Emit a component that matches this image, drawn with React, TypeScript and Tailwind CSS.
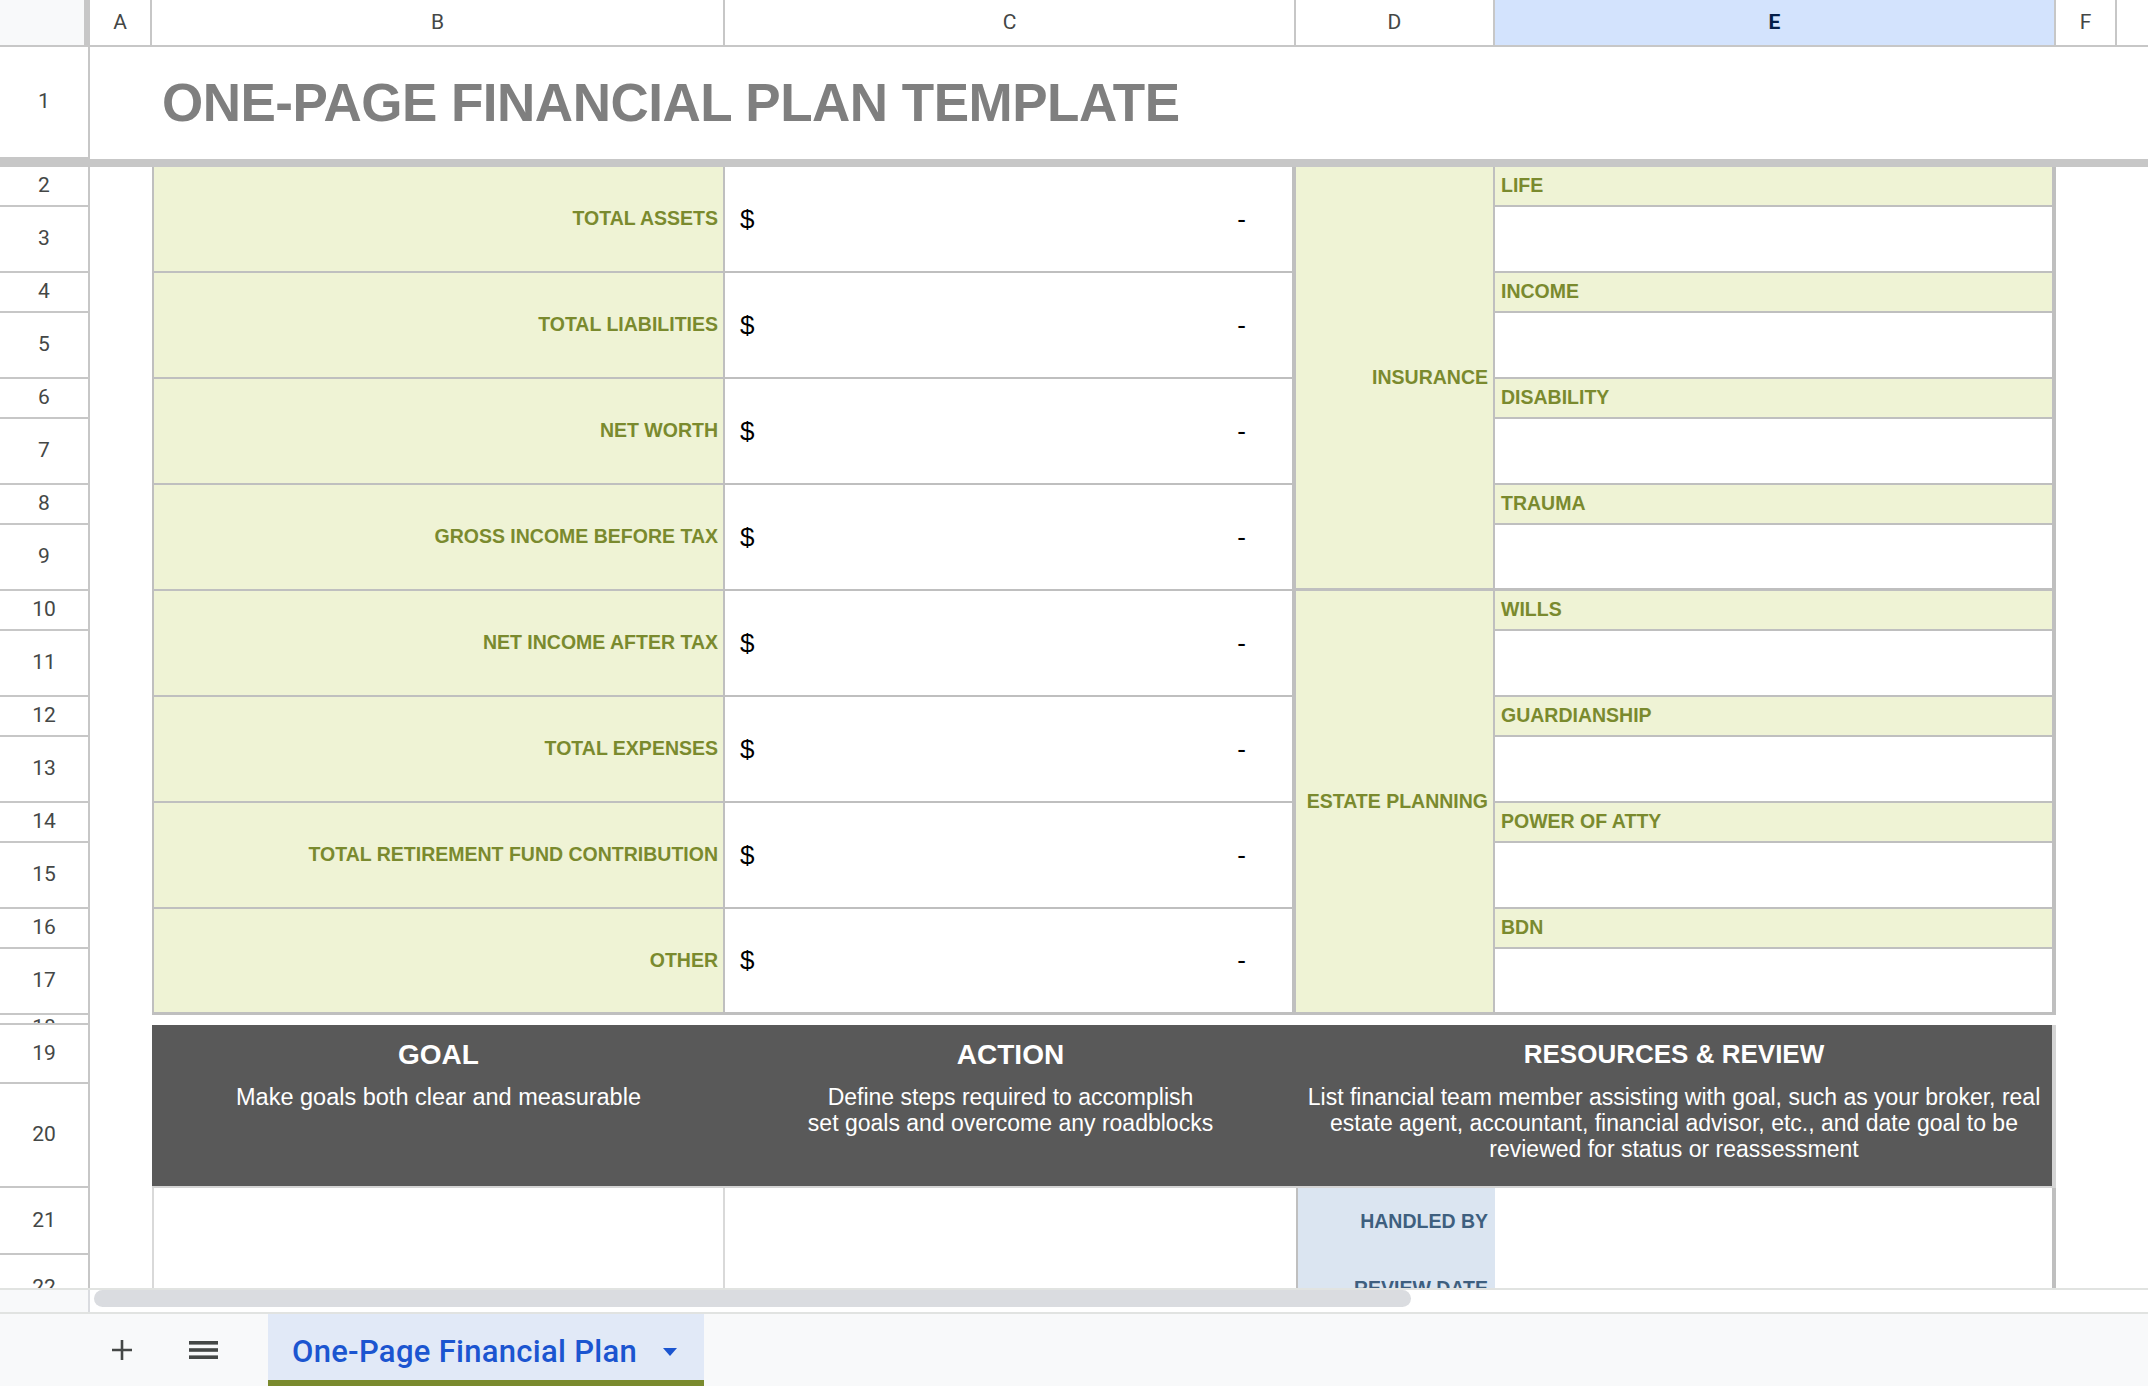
import React from "react";

const metrics = [
  "TOTAL ASSETS",
  "TOTAL LIABILITIES",
  "NET WORTH",
  "GROSS INCOME BEFORE TAX",
  "NET INCOME AFTER TAX",
  "TOTAL EXPENSES",
  "TOTAL RETIREMENT FUND CONTRIBUTION",
  "OTHER",
];

const coverGroups = [
  { title: "INSURANCE", items: ["LIFE", "INCOME", "DISABILITY", "TRAUMA"] },
  { title: "ESTATE PLANNING", items: ["WILLS", "GUARDIANSHIP", "POWER OF ATTY", "BDN"] },
];

const columns = [
  { id: "A", w: "w-[62px]" },
  { id: "B", w: "w-[573px]" },
  { id: "C", w: "w-[571px]" },
  { id: "D", w: "w-[199px]" },
  { id: "E", w: "w-[561px]", active: true },
  { id: "F", w: "w-[61px]" },
];

const bodyRows = Array.from({ length: 16 }, (_, i) => ({
  n: String(i + 2),
  h: i % 2 === 0 ? "h-[40px]" : "h-[66px]",
}));

const tailRows = [
  { n: "19", h: "h-[59px]" },
  { n: "20", h: "h-[104px]" },
  { n: "21", h: "h-[67px]" },
  { n: "22", h: "h-[67px]" },
];

const RowNum = ({ n, h }: { n: string; h: string }) => (
  <div
    className={`${h} flex shrink-0 items-center justify-center overflow-hidden border-b-2 border-[#c7c7c7] text-[21px] text-[#444746]`}
  >
    {n}
  </div>
);

const App = () => {
  return (
    <div className="flex h-screen w-full flex-col overflow-hidden bg-white font-['Liberation_Sans',Arial,sans-serif]">
      {/* column headers */}
      <div className="flex h-[47px] shrink-0 border-b-2 border-[#c7c7c7] font-['Roboto',sans-serif] text-[21px] text-[#444746]">
        <div className="w-[90px] shrink-0 border-r-[6px] border-[#c7c7c7] bg-[#f8f9fa]" />
        {columns.map((c) => (
          <div
            key={c.id}
            className={`${c.w} flex shrink-0 items-center justify-center border-r-2 border-[#c7c7c7] ${
              c.active ? "bg-[#d3e3fd] font-bold text-[#041e49]" : ""
            }`}
          >
            {c.id}
          </div>
        ))}
        <div className="flex-1" />
      </div>

      <div className="flex min-h-0 flex-1 overflow-hidden">
        {/* row numbers */}
        <div className="flex w-[90px] shrink-0 flex-col border-r-2 border-[#c7c7c7] font-['Roboto',sans-serif]">
          <RowNum n="1" h="h-[112px]" />
          <div className="h-[8px] shrink-0 bg-[#c7c7c7]" />
          {bodyRows.map((r) => (
            <RowNum key={r.n} n={r.n} h={r.h} />
          ))}
          <div className="h-[10px] shrink-0 overflow-hidden border-b-2 border-[#c7c7c7] pt-[2px] text-center text-[21px] leading-none text-[#444746]">
            18
          </div>
          {tailRows.map((r) => (
            <RowNum key={r.n} n={r.n} h={r.h} />
          ))}
        </div>

        {/* sheet */}
        <div className="flex min-w-0 flex-1 flex-col">
          <div className="flex h-[112px] shrink-0 items-center pl-[72px]">
            <h1 className="whitespace-nowrap text-[53px] font-bold tracking-[-0.5px] text-[#7f7f7f]">
              ONE-PAGE FINANCIAL PLAN TEMPLATE
            </h1>
          </div>
          <div className="h-[8px] shrink-0 bg-[#c7c7c7]" />

          <div className="flex h-[848px] shrink-0">
            <div className="w-[62px] shrink-0" />

            <div className="flex w-[1144px] shrink-0 flex-col">
              {metrics.map((m, i) => (
                <div
                  key={m}
                  className={`flex h-[106px] shrink-0 border-[#bfbfbf] ${
                    i === metrics.length - 1 ? "border-b-[3px]" : "border-b-2"
                  }`}
                >
                  <div className="flex w-[573px] shrink-0 items-center justify-end border-x-2 border-[#bfbfbf] bg-[#eff3d5] pr-[5px] text-[19.5px] font-bold text-[#7a8a2e]">
                    {m}
                  </div>
                  <div className="flex flex-1 items-center justify-between border-r-4 border-[#bfbfbf] pl-[15px] pr-[46px] text-[26px] text-black">
                    <span>$</span>
                    <span>-</span>
                  </div>
                </div>
              ))}
            </div>

            <div className="flex w-[199px] shrink-0 flex-col">
              {coverGroups.map((g) => (
                <div
                  key={g.title}
                  className="flex h-[424px] shrink-0 items-center justify-end border-r-2 border-b-[3px] border-[#bfbfbf] bg-[#eff3d5] pr-[5px] text-[19.5px] font-bold text-[#7a8a2e]"
                >
                  {g.title}
                </div>
              ))}
            </div>

            <div className="flex w-[561px] shrink-0 flex-col">
              {coverGroups.map((g) =>
                g.items.map((item, i) => (
                  <React.Fragment key={item}>
                    <div className="flex h-[40px] shrink-0 items-center border-r-4 border-b-2 border-[#bfbfbf] bg-[#eff3d5] pl-[6px] text-[19.5px] font-bold text-[#7a8a2e]">
                      {item}
                    </div>
                    <div
                      className={`h-[66px] shrink-0 border-r-4 border-[#bfbfbf] ${
                        i === g.items.length - 1 ? "border-b-[3px]" : "border-b-2"
                      }`}
                    />
                  </React.Fragment>
                ))
              )}
            </div>
          </div>

          <div className="h-[10px] shrink-0" />

          <div className="flex h-[163px] shrink-0">
            <div className="w-[62px] shrink-0" />
            <div className="flex shrink-0 border-b-2 border-r-4 border-[#d4d4d4] bg-[#595959] text-white">
              <div className="flex w-[573px] flex-col">
                <div className="flex h-[59px] items-center justify-center text-[28px] font-bold">GOAL</div>
                <p className="text-center text-[23.5px] leading-[26px]">Make goals both clear and measurable</p>
              </div>
              <div className="flex w-[571px] flex-col">
                <div className="flex h-[59px] items-center justify-center text-[28px] font-bold">ACTION</div>
                <p className="text-center text-[23px] leading-[26px]">
                  Define steps required to accomplish
                  <br />
                  set goals and overcome any roadblocks
                </p>
              </div>
              <div className="flex w-[756px] flex-col">
                <div className="flex h-[59px] items-center justify-center text-[26px] font-bold">
                  RESOURCES &amp; REVIEW
                </div>
                <p className="whitespace-nowrap text-center text-[23px] leading-[26px]">
                  List financial team member assisting with goal, such as your broker, real
                  <br />
                  estate agent, accountant, financial advisor, etc., and date goal to be
                  <br />
                  reviewed for status or reassessment
                </p>
              </div>
            </div>
          </div>

          <div className="flex h-[134px] shrink-0">
            <div className="w-[62px] shrink-0" />
            <div className="w-[573px] shrink-0 border-x-2 border-[#d9d9d9]" />
            <div className="w-[571px] shrink-0" />
            <div className="flex w-[199px] shrink-0 flex-col border-l-2 border-[#bfbfbf] bg-[#dbe5f1] text-[19.5px] font-bold text-[#3e5f7f]">
              <div className="flex h-[67px] items-center justify-end pr-[7px]">HANDLED BY</div>
              <div className="flex h-[67px] items-center justify-end pr-[7px]">REVIEW DATE</div>
            </div>
            <div className="w-[561px] shrink-0 border-r-4 border-[#bfbfbf]" />
          </div>
        </div>
      </div>

      {/* horizontal scrollbar */}
      <div className="flex h-[24px] shrink-0 border-t-2 border-[#e1e3e1]">
        <div className="w-[90px] shrink-0 border-r-2 border-[#dadce0] bg-[#f8f9fa]" />
        <div className="flex-1 bg-white pl-[4px]">
          <div className="h-[17px] w-[1317px] rounded-full bg-[#dadce0]" />
        </div>
      </div>

      {/* sheet tabs */}
      <div className="flex h-[74px] shrink-0 border-t-2 border-[#e1e3e1] bg-[#f8f9fa] font-['Roboto',sans-serif]">
        <div className="ml-[100px] flex w-[44px] items-center justify-center">
          <svg width="22" height="22" viewBox="0 0 22 22" fill="none" stroke="#444746" strokeWidth="2.6">
            <path d="M11 1v20M1 11h20" />
          </svg>
        </div>
        <div className="ml-[37px] flex w-[44px] items-center justify-center">
          <svg width="29" height="18" viewBox="0 0 29 18" fill="#444746">
            <rect x="0" y="0" width="29" height="3.6" />
            <rect x="0" y="7.2" width="29" height="3.6" />
            <rect x="0" y="14.4" width="29" height="3.6" />
          </svg>
        </div>
        <div className="ml-[43px] flex w-[436px] flex-col bg-[#e1e9f7]">
          <div className="flex flex-1 items-center pl-[24px] pt-[10px]">
            <span className="whitespace-nowrap text-[31px] font-medium tracking-[0.3px] text-[#1b55d0]">
              One-Page Financial Plan
            </span>
            <svg className="ml-[26px]" width="14" height="8" viewBox="0 0 14 8" fill="#1b55d0">
              <polygon points="0,0 14,0 7,8" />
            </svg>
          </div>
          <div className="h-[6px] bg-[#7a8a2e]" />
        </div>
      </div>
    </div>
  );
};

export default App;
